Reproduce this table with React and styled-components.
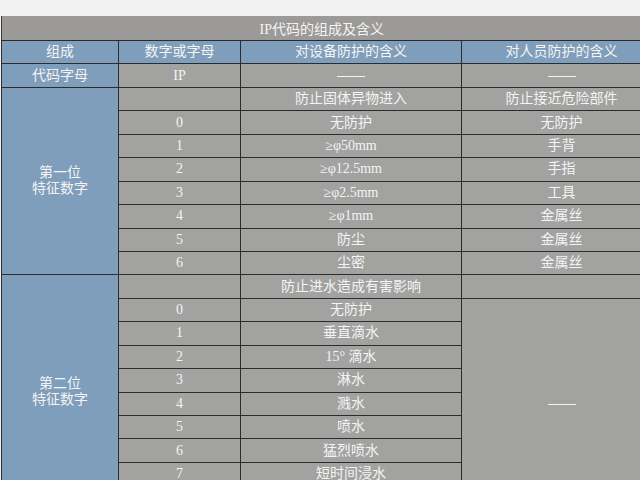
import React from "react";
import styled, { createGlobalStyle } from "styled-components";

const GlobalStyle = createGlobalStyle`
	html, body {
		margin: 0;
		padding: 0;
		background: #f2f2f2;
		font-family: "Liberation Serif", "Noto Sans CJK SC", serif;
	}
`;

const Page = styled.div`
	padding-top: 16px;
	padding-left: 1px;
	width: 640px;
	height: 480px;
	overflow: hidden;
	box-sizing: border-box;
`;

const Table = styled.table`
	width: 660px;
	table-layout: fixed;
	border-collapse: collapse;
	color: #f4f4f4;
	font-size: 14px;
`;

const TitleCell = styled.td`
	height: 24px;
	background: #9b9a99;
	text-align: center;
	padding: 0 20px 0 0;
	border-left: 1px solid #3a3a3a;
	border-bottom: 1px solid #2a2a2a;
`;

const Row = styled.tr`
	height: 23.44px;
`;

const Cell = styled.td`
	padding: 0;
	text-align: center;
	vertical-align: middle;
	line-height: 16px;
	border: 1px solid #2c2c2c;
	background: ${(p) => (p.$blue ? "#7f9ebb" : "#a2a2a1")};
	white-space: nowrap;
`;

const Dash = styled.span`
	display: inline-block;
	width: 28px;
	height: 1px;
	background: #f4f4f4;
	vertical-align: middle;
`;

const firstRows = [
	["0", "无防护", "无防护"],
	["1", "≥φ50mm", "手背"],
	["2", "≥φ12.5mm", "手指"],
	["3", "≥φ2.5mm", "工具"],
	["4", "≥φ1mm", "金属丝"],
	["5", "防尘", "金属丝"],
	["6", "尘密", "金属丝"],
];

const secondRows = [
	["0", "无防护"],
	["1", "垂直滴水"],
	["2", "15° 滴水"],
	["3", "淋水"],
	["4", "溅水"],
	["5", "喷水"],
	["6", "猛烈喷水"],
	["7", "短时间浸水"],
	["8", "持续浸水"],
];

const App = () => {
	return (
		<>
			<GlobalStyle />
			<Page>
				<Table>
					<colgroup>
						<col style={{ width: 117 }} />
						<col style={{ width: 122 }} />
						<col style={{ width: 221 }} />
						<col style={{ width: 200 }} />
					</colgroup>
					<tbody>
						<tr>
							<TitleCell colSpan={4}>IP代码的组成及含义</TitleCell>
						</tr>
						<Row>
							<Cell $blue>组成</Cell>
							<Cell $blue>数字或字母</Cell>
							<Cell $blue>对设备防护的含义</Cell>
							<Cell $blue>对人员防护的含义</Cell>
						</Row>
						<Row>
							<Cell $blue>代码字母</Cell>
							<Cell>IP</Cell>
							<Cell>
								<Dash />
							</Cell>
							<Cell>
								<Dash />
							</Cell>
						</Row>
						<Row>
							<Cell $blue rowSpan={8}>
								第一位
								<br />
								特征数字
							</Cell>
							<Cell />
							<Cell>防止固体异物进入</Cell>
							<Cell>防止接近危险部件</Cell>
						</Row>
						{firstRows.map(([num, dev, man]) => (
							<Row key={"a" + num}>
								<Cell>{num}</Cell>
								<Cell>{dev}</Cell>
								<Cell>{man}</Cell>
							</Row>
						))}
						<Row>
							<Cell $blue rowSpan={10}>
								第二位
								<br />
								特征数字
							</Cell>
							<Cell />
							<Cell>防止进水造成有害影响</Cell>
							<Cell />
						</Row>
						{secondRows.map(([num, dev], i) => (
							<Row key={"b" + num}>
								<Cell>{num}</Cell>
								<Cell>{dev}</Cell>
								{i === 0 && (
									<Cell rowSpan={secondRows.length}>
										<Dash />
									</Cell>
								)}
							</Row>
						))}
					</tbody>
				</Table>
			</Page>
		</>
	);
};

export default App;
